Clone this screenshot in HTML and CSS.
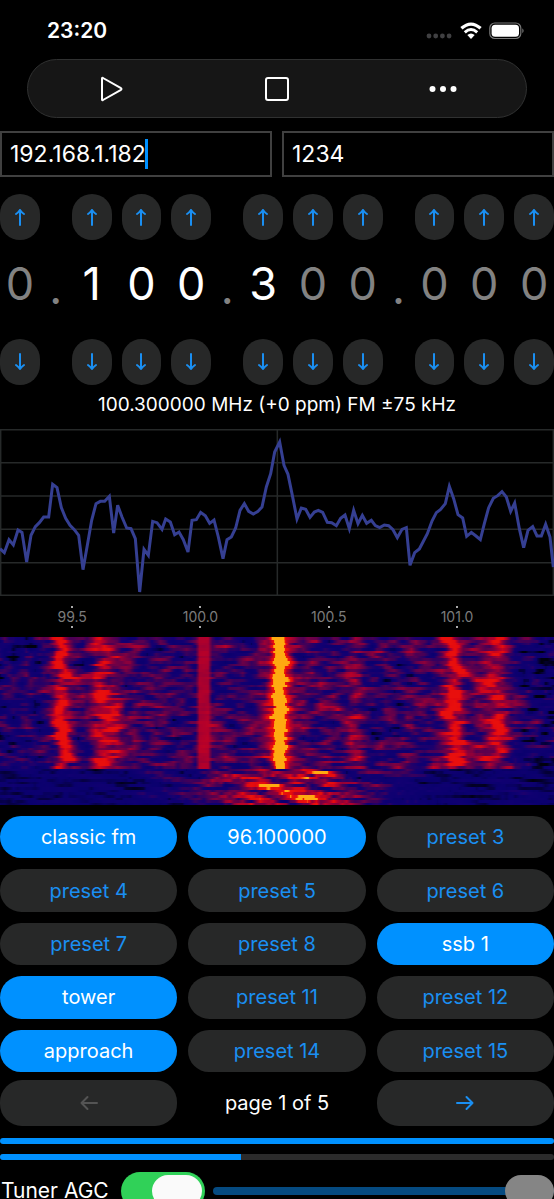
FILE: index.html
```html
<!DOCTYPE html>
<html lang="en">
<head>
<meta charset="utf-8">
<meta name="viewport" content="width=device-width, initial-scale=1">
<title>Radio</title>
<link rel="stylesheet" href="styles.css">
</head>
<body>
<svg class="symbols" aria-hidden="true">
  <symbol id="up" viewBox="0 0 12 18"><path d="M6 17V2M2 6C3.500 5 5 3.500 6 2C7 3.500 8.500 5 10 6"/></symbol>
  <symbol id="down" viewBox="0 0 12 18"><path d="M6 1V16M2 12C3.500 13 5 14.500 6 16C7 14.500 8.500 13 10 12"/></symbol>
  <symbol id="right" viewBox="0 0 18 16"><path d="M1 8H16.500M10.500 2L16.500 8L10.500 14"/></symbol>
  <symbol id="left" viewBox="0 0 18 16"><path d="M17 8H1.500M7.500 2L1.500 8L7.500 14"/></symbol>
</svg>
<main class="app">
  <header class="status">
    <time class="clock">23:20</time>
    <div class="indicators">
      <svg width="27" height="18" viewBox="0 0 27 18" fill="#404042"><circle cx="3" cy="14" r="2.400"/><circle cx="9.700" cy="14" r="2.400"/><circle cx="16.400" cy="14" r="2.400"/><circle cx="23.100" cy="14" r="2.400"/></svg>
      <svg width="22" height="18" viewBox="0 0 22 18" fill="none" stroke="#fff"><path stroke-width="3.200" d="M1.400 6.300Q11-2.200 20.600 6.300"/><path stroke-width="3" d="M4.800 10.300Q11 4.700 17.200 10.300"/><path fill="#fff" stroke="none" d="M7.300 13Q11 9.900 14.700 13L11 17Z"/></svg>
      <svg width="36" height="18" viewBox="0 0 36 18"><rect x=".8" y="1" width="31" height="15.500" rx="5" fill="none" stroke="#777" stroke-width="1.200"/><rect x="2.600" y="2.700" width="27.400" height="12" rx="3.500" fill="#fff"/><path d="M33.300 6.300Q36 8.700 33.300 11.200Z" fill="#777"/></svg>
    </div>
  </header>

  <nav class="toolbar" aria-label="Playback">
    <button type="button" aria-label="Play"><svg width="26" height="28" viewBox="0 0 26 28"><path d="M4 3.500V24.500Q4 25.500 5 25L23 14.800Q24 14 23 13.200L5 3Q4 2.500 4 3.500Z"/></svg></button>
    <button type="button" aria-label="Stop"><svg width="26" height="28" viewBox="0 0 26 28"><rect x="2" y="3" width="22" height="22" rx="2"/></svg></button>
    <button type="button" aria-label="More"><svg class="dots" width="28" height="28" viewBox="0 0 28 28"><circle cx="3.500" cy="14" r="3"/><circle cx="14" cy="14" r="3"/><circle cx="24.500" cy="14" r="3"/></svg></button>
  </nav>

  <div class="fields">
    <div class="field"><input type="text" aria-label="Host" value="192.168.1.182"><span class="caret"></span></div>
    <div class="field"><input type="text" aria-label="Port" value="1234"></div>
  </div>

  <section class="tuner" aria-label="Frequency">
    <div class="steps">
      <button type="button" aria-label="Up"><svg><use href="#up"/></svg></button><span></span>
      <button type="button" aria-label="Up"><svg><use href="#up"/></svg></button>
      <button type="button" aria-label="Up"><svg><use href="#up"/></svg></button>
      <button type="button" aria-label="Up"><svg><use href="#up"/></svg></button><span></span>
      <button type="button" aria-label="Up"><svg><use href="#up"/></svg></button>
      <button type="button" aria-label="Up"><svg><use href="#up"/></svg></button>
      <button type="button" aria-label="Up"><svg><use href="#up"/></svg></button><span></span>
      <button type="button" aria-label="Up"><svg><use href="#up"/></svg></button>
      <button type="button" aria-label="Up"><svg><use href="#up"/></svg></button>
      <button type="button" aria-label="Up"><svg><use href="#up"/></svg></button>
    </div>
    <div class="steps digits">
      <span>0</span><span class="point">.</span>
      <span class="on">1</span><span class="on">0</span><span class="on">0</span><span class="point">.</span>
      <span class="on">3</span><span>0</span><span>0</span><span class="point">.</span>
      <span>0</span><span>0</span><span>0</span>
    </div>
    <div class="steps">
      <button type="button" aria-label="Down"><svg><use href="#down"/></svg></button><span></span>
      <button type="button" aria-label="Down"><svg><use href="#down"/></svg></button>
      <button type="button" aria-label="Down"><svg><use href="#down"/></svg></button>
      <button type="button" aria-label="Down"><svg><use href="#down"/></svg></button><span></span>
      <button type="button" aria-label="Down"><svg><use href="#down"/></svg></button>
      <button type="button" aria-label="Down"><svg><use href="#down"/></svg></button>
      <button type="button" aria-label="Down"><svg><use href="#down"/></svg></button><span></span>
      <button type="button" aria-label="Down"><svg><use href="#down"/></svg></button>
      <button type="button" aria-label="Down"><svg><use href="#down"/></svg></button>
      <button type="button" aria-label="Down"><svg><use href="#down"/></svg></button>
    </div>
    <p class="summary">100.300000 MHz (+0 ppm) FM ±75 kHz</p>
  </section>

  <svg class="spectrum" viewBox="0 26 1662 501" preserveAspectRatio="none" role="img" aria-label="Spectrum">
    <path class="grid" d="M2 28H1660V525H2ZM0 127H1662M0 227H1662M0 327H1662M0 427H1662M832 28V525"/>
    <polyline class="trace" points="0,385 13,397 27,358 40,374 54,329 66,336 80,425 93,345 106,319 118,307 131,290 146,290 158,192 171,202 184,262 197,294 210,315 223,328 236,345 249,448 262,375 275,300 288,250 301,243 314,243 328,228 341,338 353,255 366,290 380,323 393,325 406,355 419,515 432,387 445,405 458,303 471,307 486,327 497,296 511,305 524,343 537,335 550,358 564,395 576,300 589,298 602,276 616,286 629,309 642,299 655,350 669,415 681,358 694,350 707,323 720,270 733,250 746,273 760,281 773,274 786,260 799,200 812,160 824,95 839,65 852,135 864,162 877,225 891,296 904,263 917,267 930,291 943,275 955,270 968,276 982,306 995,307 1009,316 1022,294 1035,284 1048,325 1061,270 1074,310 1087,285 1100,309 1114,300 1126,316 1139,322 1153,314 1166,316 1179,328 1192,352 1206,327 1219,322 1230,435 1244,397 1258,386 1269,365 1282,340 1296,302 1309,277 1321,268 1336,250 1348,198 1361,235 1374,283 1388,293 1400,348 1414,336 1428,347 1441,358 1453,310 1466,262 1480,234 1493,226 1506,214 1519,230 1532,273 1544,248 1558,325 1571,382 1584,330 1598,319 1611,347 1624,347 1637,312 1650,350 1660,440"/>
  </svg>
  <div class="axis"><span>99.5</span><span>100.0</span><span>100.5</span><span>101.0</span></div>
  <canvas class="waterfall" width="554" height="168" role="img" aria-label="Waterfall"></canvas>

  <section class="presets" aria-label="Presets">
    <button type="button" class="active">classic fm</button><button type="button" class="active">96.100000</button><button type="button">preset 3</button>
    <button type="button">preset 4</button><button type="button">preset 5</button><button type="button">preset 6</button>
    <button type="button">preset 7</button><button type="button">preset 8</button><button type="button" class="active">ssb 1</button>
    <button type="button" class="active">tower</button><button type="button">preset 11</button><button type="button">preset 12</button>
    <button type="button" class="active">approach</button><button type="button">preset 14</button><button type="button">preset 15</button>
  </section>
  <div class="pager">
    <button type="button" disabled aria-label="Previous page"><svg><use href="#left"/></svg></button>
    <span>page 1 of 5</span>
    <button type="button" aria-label="Next page"><svg><use href="#right"/></svg></button>
  </div>

  <div class="meter"><div class="fill" style="width:100%"></div></div>
  <div class="meter"><div class="fill" style="width:43.5%"></div></div>

  <div class="gain">
    <label for="agc">Tuner AGC</label>
    <input id="agc" class="switch" type="checkbox" role="switch" checked>
    <input class="slider" type="range" min="0" max="100" value="100" disabled aria-label="Tuner gain">
  </div>
</main>
<script src="waterfall.js"></script>
</body>
</html>
```

FILE: styles.css
```css
* { box-sizing: border-box; }

body {
  margin: 0;
  background: #000;
  color: #fff;
  font-family: Inter, Roboto, "Liberation Sans", sans-serif;
  font-size: 20px;
}

button, input { font: inherit; color: inherit; margin: 0; }

button {
  display: flex;
  align-items: center;
  justify-content: center;
  padding: 0;
  border: 0;
  background: #272828;
  color: #1a8ff2;
}

.symbols { position: absolute; width: 0; height: 0; }

.app {
  display: flex;
  flex-direction: column;
  height: 100vh;
  overflow: hidden;
}
.app > * { flex-shrink: 0; }

.status {
  display: flex;
  align-items: center;
  justify-content: space-between;
  height: 59px;
  padding: 2px 29px 0 47px;
}
.clock { font-size: 21px; font-weight: 600; }
.indicators { display: flex; gap: 7px; }

.toolbar {
  display: grid;
  grid-template-columns: repeat(3, 1fr);
  height: 59px;
  margin: 0 27px;
  border: 1px solid #303131;
  border-radius: 30px;
  background: #161616;
}
.toolbar button { background: none; }
.toolbar svg { fill: none; stroke: #fff; stroke-width: 2; stroke-linejoin: round; }
.toolbar .dots { fill: #fff; stroke: none; }

.fields {
  display: grid;
  grid-template-columns: 1fr 1fr;
  gap: 10px;
  margin-top: 13px;
}
.field { position: relative; }
.field input {
  display: block;
  width: 100%;
  height: 46px;
  padding: 0 8px;
  border: 2px solid #404040;
  border-radius: 0;
  background: #000;
  font-size: 23px;
  outline: 0;
}
.caret {
  position: absolute;
  left: 145px;
  top: 8px;
  width: 3px;
  height: 30px;
  background: #0091ff;
}

.tuner { margin-top: 17px; }
.steps {
  display: grid;
  grid-template-columns: 1fr 12px repeat(3, 1fr) 12px repeat(3, 1fr) 12px repeat(3, 1fr);
  column-gap: 10px;
}
.steps button { height: 46px; border-radius: 20px; }
.steps svg { width: 12px; height: 18px; }
.steps svg, .pager svg {
  fill: none;
  stroke: currentColor;
  stroke-width: 2;
  stroke-linecap: round;
  stroke-linejoin: round;
}
.digits {
  height: 99px;
  line-height: 88px;
  font-size: 45px;
  color: #828282;
}
.digits span { display: flex; justify-content: center; }
.digits .on { color: #fff; }
.digits .point { padding-top: 4px; }
.summary {
  margin: 0;
  height: 44px;
  line-height: 40px;
  font-size: 19px;
  text-align: center;
}

.spectrum { display: block; width: 100%; height: 167px; }
.spectrum path, .spectrum polyline { fill: none; vector-effect: non-scaling-stroke; }
.spectrum .grid { stroke: #262929; stroke-width: 1.500px; }
.spectrum .trace { stroke: #353f92; stroke-width: 3px; }

.axis {
  display: flex;
  height: 41px;
  padding: 10px 0 9px 8px;
  font-size: 14px;
  line-height: 18px;
  color: #7b7b7b;
}
.axis span {
  display: flex;
  flex-direction: column;
  align-items: center;
  width: 23.5%;
}
.axis span::before, .axis span::after {
  content: "";
  flex: 0 0 2px;
  width: 2px;
  background: #aaa;
}

.waterfall { display: block; width: 100%; height: 168px; }

.presets {
  display: grid;
  grid-template-columns: repeat(3, 1fr);
  grid-auto-rows: 1fr;
  gap: 11px;
  min-height: 256px;
  margin-top: 11px;
}
.presets button, .pager button { border-radius: 22px; }
.presets .active { background: #0091ff; color: #fff; }

.pager {
  display: grid;
  grid-template-columns: repeat(3, 1fr);
  column-gap: 11px;
  align-items: center;
  height: 46px;
  margin: 8px 0 12px;
  text-align: center;
}
.pager button { height: 46px; }
.pager button:disabled { color: #545454; }
.pager svg { width: 18px; height: 16px; }

.meter {
  height: 6px;
  margin-bottom: 10px;
  border-radius: 3px;
  background: #2b2b2b;
  overflow: hidden;
}
.fill { height: 100%; background: #0091ff; }

.gain {
  display: flex;
  align-items: center;
  height: 38px;
  margin-top: 2px;
  padding-left: 1px;
  font-size: 21px;
  line-height: 22px;
}
.switch {
  appearance: none;
  flex: none;
  width: 84px;
  height: 38px;
  margin: 0 8px 0 12px;
  padding: 3px;
  border-radius: 19px;
  background: #2b2b2b;
}
.switch::before {
  content: "";
  display: block;
  width: 50px;
  height: 32px;
  border-radius: 16px;
  background: #fafafa;
}
.switch:checked { background: #30d158; }
.switch:checked::before { margin-left: auto; }
.slider {
  appearance: none;
  flex: 1;
  min-width: 0;
  height: 38px;
  background: none;
}
.slider::-webkit-slider-runnable-track {
  height: 8px;
  border-radius: 4px;
  background: #054a80;
}
.slider::-webkit-slider-thumb {
  appearance: none;
  width: 49px;
  height: 32px;
  margin-top: -12px;
  border-radius: 16px;
  background: #858585;
}
```

FILE: waterfall.js
```js
// Waterfall: one row of bin levels per sweep.
const canvas = document.querySelector('.waterfall');
const ctx = canvas.getContext('2d');
const W = canvas.width, H = canvas.height;
const BINS = 128, ROWS = 64, RETUNE = 50;

let seed = 7;
function rnd() {
  seed = (seed * 1664525 + 1013904223) >>> 0;
  return seed / 4294967296;
}

const palette = [
  [0, 0, 0, 15], [0.14, 10, 0, 110], [0.28, 18, 0, 114], [0.42, 65, 0, 88],
  [0.56, 115, 0, 68], [0.7, 180, 0, 42], [0.8, 228, 10, 14],
  [0.92, 236, 20, 12], [0.96, 255, 120, 10], [1, 255, 170, 16]
];
function colour(v) {
  v = Math.max(0, Math.min(1, v));
  let i = 1;
  while (palette[i][0] < v) i++;
  const a = palette[i - 1], b = palette[i];
  const t = (v - a[0]) / (b[0] - a[0]);
  return [1, 2, 3].map(k => a[k] + (b[k] - a[k]) * t);
}

// Drift of each station's centre over time: [y, x] pairs.
const left1 = [[0, 58], [8, 63], [13, 63], [19, 55], [26, 60], [36, 67], [43, 60], [53, 62], [66, 60], [80, 59], [90, 60], [100, 63], [111, 65], [120, 65], [131, 60]];
const left2 = [[0, 101], [19, 107], [36, 100], [45, 100], [60, 103], [70, 107], [86, 107], [93, 103], [106, 113], [116, 103], [131, 107]];
const right1 = [[0, 448], [9, 457], [19, 449], [26, 452], [36, 458], [46, 452], [60, 454], [73, 449], [81, 452], [90, 455], [100, 454], [110, 457], [131, 453]];
const right2 = [[0, 494], [9, 489], [19, 500], [30, 495], [43, 494], [60, 497], [73, 500], [86, 497], [96, 500], [110, 497], [131, 497]];
function track(points, y) {
  let i = 1;
  while (i < points.length - 1 && points[i][0] < y) i++;
  const a = points[i - 1], b = points[i];
  return a[1] + (b[1] - a[1]) * (y - a[0]) / (b[0] - a[0]);
}
const bell = (x, c, w) => Math.exp(-(((x - c) / w) ** 2));

const image = ctx.createImageData(W, H);
const levels = [];
let previous = new Array(BINS + 8).fill(0);
for (let r = 0; r < ROWS; r++) {
  const y = r * H / ROWS;
  const raw = Array.from({ length: BINS + 8 }, () => rnd() - 0.5);
  const row = [], noise = [];
  const jitter = [0, 0, 0, 0].map(() => (rnd() - 0.5) * 5);
  for (let b = 0; b <= BINS; b++) {
    const x = b * W / BINS;
    let n = (raw[b] + raw[b + 1] * 1.3 + raw[b + 2]) * 0.6;
    let v;
    if (r < RETUNE) {
      n = n * 0.85 + previous[b] * 0.35;
      v = 0.3 + 0.1 * bell(x, 100, 60) + 0.09 * bell(x, 290, 130) + 0.1 * bell(x, 465, 60)
        - 0.06 * bell(x, 0, 30) - 0.12 * bell(x, 554, 40) + n * 0.42;
      v += 0.5 * bell(x, track(left1, y) + jitter[0], 8);
      v += 0.3 * bell(x, track(left2, y) + jitter[1], 13);
      v += 0.52 * bell(x, track(right1, y) + jitter[2], 8);
      v += 0.36 * bell(x, track(right2, y) + jitter[3], 13);
      v += 0.18 * bell(x, 355, 9);
      v = Math.min(v, 0.86);
      if (Math.abs(x - 203) < 6) v = 0.68 + n * 0.05;
      v += 0.5 * bell(x, 279 + jitter[0] * 0.3, 13) + 0.5 * bell(x, 279 + jitter[1] * 0.4, 5);
    } else {
      n = (raw[b] + raw[b + 1] + raw[b + 2] + raw[b + 3] + raw[b + 4]) * 0.5
        + (previous[Math.max(0, b - 2)] || 0) * 0.45;
      v = 0.15 + 0.58 * bell(x, 288, 80) + n * (0.14 + 0.5 * bell(x, 284, 95));
    }
    noise.push(n);
    row.push(v);
  }
  previous = noise;
  levels.push(row);
}
for (let y = 0; y < H; y++) {
  const row = levels[Math.floor(y * ROWS / H)];
  for (let x = 0; x < W; x++) {
    const p = x * BINS / W, b = Math.floor(p), t = p - b;
    const c = colour(row[b] * (1 - t) + row[b + 1] * t);
    const o = (y * W + x) * 4;
    image.data[o] = c[0];
    image.data[o + 1] = c[1];
    image.data[o + 2] = c[2];
    image.data[o + 3] = 255;
  }
}
ctx.putImageData(image, 0, 0);
```
